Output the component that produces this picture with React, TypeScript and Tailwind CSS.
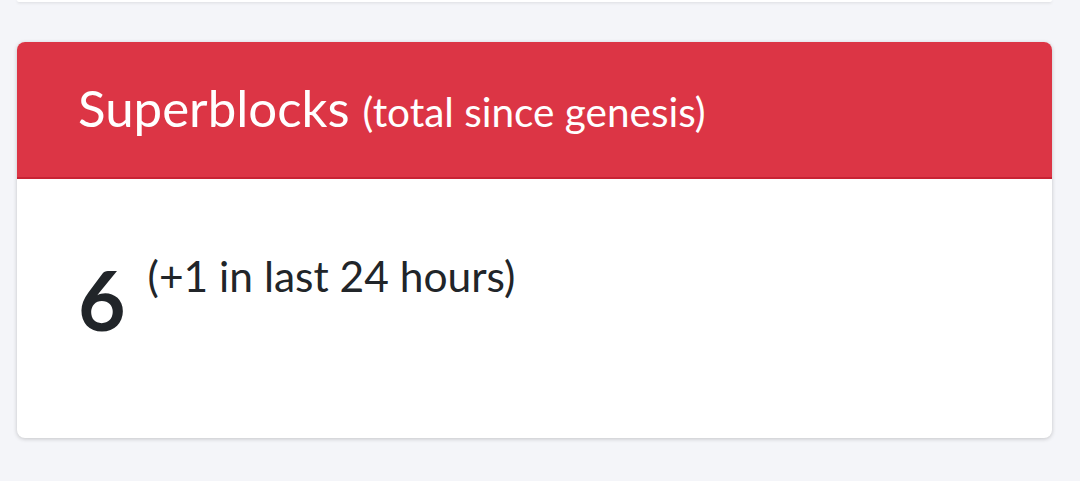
export default function App() {
  return (
    <div
      className="flex min-h-[481px] flex-col bg-[#f4f5f9] pl-[17px] pr-[28px]"
      style={{ fontFamily: "Lato, 'Open Sans', sans-serif" }}
    >
      {/* previous card bottom edge */}
      <div className="h-[2px] rounded-b-lg bg-white shadow-[0_1px_3px_rgba(0,0,0,0.12)]" />

      <div className="mt-[40px] overflow-hidden rounded-lg bg-white shadow-[0_1px_4px_rgba(0,0,0,0.2)]">
        <div className="flex h-[137px] items-center border-b-2 border-[#c82333] bg-[#dc3545] px-[61px] pb-1 text-white">
          <h2 className="text-[51px] leading-none">
            Superblocks <span className="text-[40.5px]">(total since genesis)</span>
          </h2>
        </div>
        <div className="flex h-[259px] items-start px-[61px] pt-[79px] text-[#212529]">
          <span className="text-[82px] leading-none font-bold">6</span>
          <span className="ml-[22px] -mt-[3px] text-[42.5px] leading-none">
            (+1 in last 24 hours)
          </span>
        </div>
      </div>
    </div>
  );
}
